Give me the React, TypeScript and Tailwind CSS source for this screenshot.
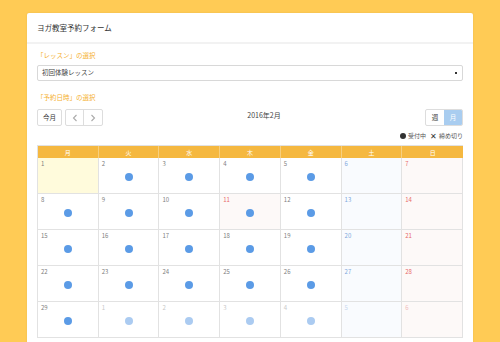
import React from "react";

type Day = { n: number; kind: "cur" | "next"; dot: boolean; holiday?: boolean; today?: boolean };

const rows: Day[][] = [
  [1, 2, 3, 4, 5, 6, 7],
  [8, 9, 10, 11, 12, 13, 14],
  [15, 16, 17, 18, 19, 20, 21],
  [22, 23, 24, 25, 26, 27, 28],
].map((r) =>
  r.map((n, i) => ({
    n,
    kind: "cur" as const,
    dot: i < 5 && n !== 1,
    holiday: n === 11,
    today: n === 1,
  }))
);
rows.push([
  { n: 29, kind: "cur", dot: true },
  { n: 1, kind: "next", dot: true },
  { n: 2, kind: "next", dot: true },
  { n: 3, kind: "next", dot: true },
  { n: 4, kind: "next", dot: true },
  { n: 5, kind: "next", dot: false },
  { n: 6, kind: "next", dot: false },
]);

const heads = ["月", "火", "水", "木", "金", "土", "日"];

function Cell({ d, col }: { d: Day; col: number }) {
  let bg = "bg-white";
  if (col === 5) bg = "bg-[#f9fbfe]";
  if (col === 6 || d.holiday) bg = "bg-[#fdf9f8]";
  if (d.today) bg = "bg-[#fffbdc]";
  let color = "text-[#808080]";
  if (col === 5) color = "text-[#7fa8dd]";
  if (col === 6 || d.holiday) color = "text-[#e86b6b]";
  if (d.kind === "next") {
    color = col === 5 ? "text-[#c8d8ee]" : col === 6 ? "text-[#f0bcbc]" : "text-[#c8c8c8]";
  }
  return (
    <div className={`relative h-[36px] border-r border-b border-[#e2e2e2] ${bg}`}>
      <div className={`absolute left-[3px] top-[3px] text-[6px] leading-none ${color}`}>{d.n}</div>
      {d.dot && (
        <div className="flex justify-center pt-[15px]">
          <div
            className={`w-[8px] h-[8px] rounded-full ${
              d.kind === "next" ? "bg-[#abcbf1]" : "bg-[#5b9be6]"
            }`}
          />
        </div>
      )}
    </div>
  );
}

export default function App() {
  return (
    <div
      className="h-[342px] overflow-hidden bg-[#ffcb55] px-[27px] pt-[13px] antialiased"
      style={{ fontFamily: '"Noto Sans CJK JP", "Noto Sans", sans-serif' }}
    >
      <div className="bg-white rounded-[2px] shadow-[0_0_2px_rgba(0,0,0,0.1)] h-[400px]">
        <div className="h-[31px] flex items-center px-[10px] border-b-2 border-[#f2f2f2] text-[7.5px] text-[#333]">
          ヨガ教室予約フォーム
        </div>
        <div className="px-[10px]">
          <div className="h-[21px] pt-[6px] text-[6.5px] leading-[10px] text-[#f5b02e]">「レッスン」の選択</div>
          <div className="h-[16px] border border-[#d8d8d8] rounded-[2px] flex items-center justify-between px-[4px] text-[6.5px] text-[#444]">
            <span>初回体験レッスン</span>
            <span className="w-[2px] h-[2px] bg-[#333] mr-[1px]" />
          </div>
          <div className="h-[28px] pt-[11px] text-[6.5px] leading-[10px] text-[#f5b02e]">「予約日時」の選択</div>
          <div className="flex items-center justify-between h-[17px]">
            <div className="flex gap-[3px] h-full">
              <div className="w-[25px] h-full border border-[#ddd] rounded-[2px] flex items-center justify-center text-[6.5px] text-[#333]">
                今月
              </div>
              <div className="flex h-full border border-[#ddd] rounded-[2px]">
                <div className="w-[18px] flex items-center justify-center border-r border-[#ddd]">
                  <svg width="6" height="8" viewBox="0 0 6 8">
                    <path d="M4.5 1 L1.5 4 L4.5 7" fill="none" stroke="#aaa" strokeWidth="1.1" />
                  </svg>
                </div>
                <div className="w-[18px] flex items-center justify-center">
                  <svg width="6" height="8" viewBox="0 0 6 8">
                    <path d="M1.5 1 L4.5 4 L1.5 7" fill="none" stroke="#aaa" strokeWidth="1.1" />
                  </svg>
                </div>
              </div>
            </div>
            <div className="text-[7px] text-[#444] -mt-[4px]">2016年2月</div>
            <div className="flex h-full border border-[#ddd] rounded-[2px] overflow-hidden">
              <div className="w-[18px] flex items-center justify-center text-[6.5px] text-[#333]">週</div>
              <div className="w-[18px] flex items-center justify-center text-[6.5px] text-white bg-[#a9cdf0]">月</div>
            </div>
          </div>
          <div className="flex justify-end items-center h-[19px] text-[6px] text-[#555] gap-[2px]">
            <span className="w-[6px] h-[6px] rounded-full bg-[#333] inline-block" />
            <span>受付中</span>
            <span className="ml-[2px] text-[8px] leading-none text-[#333]">✕</span>
            <span>締め切り</span>
          </div>
          <div className="border-l border-t border-[#e2e2e2]">
            <div className="grid grid-cols-7 bg-[#f5b840]">
              {heads.map((h, i) => (
                <div
                  key={h}
                  className={`h-[12px] flex items-center justify-center text-[6px] text-white ${
                    i < 6 ? "border-r border-[#f8cf7d]" : ""
                  }`}
                >
                  {h}
                </div>
              ))}
            </div>
            {rows.map((r, ri) => (
              <div key={ri} className="grid grid-cols-7">
                {r.map((d, ci) => (
                  <Cell key={ci} d={d} col={ci} />
                ))}
              </div>
            ))}
          </div>
        </div>
      </div>
    </div>
  );
}
